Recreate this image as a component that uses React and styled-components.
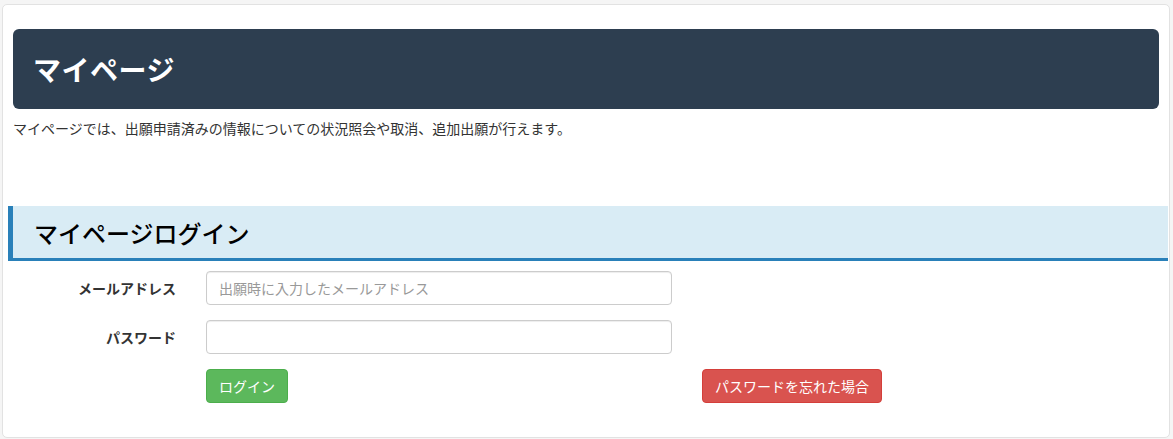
import React from "react"
import styled, { createGlobalStyle } from "styled-components"

const GlobalStyle = createGlobalStyle`
  html, body {
    margin: 0;
    padding: 0;
    background: #f5f5f5;
  }
  body {
    font-family: "Noto Sans CJK JP", "Liberation Sans", sans-serif;
    color: #333;
  }
  * {
    box-sizing: border-box;
  }
`

const Page = styled.div`
  padding: 4px 3px 2px 2px;
`

const Card = styled.div`
  background: #fff;
  border: 1px solid #e2e2e2;
  border-radius: 5px;
  padding: 24px 5px 34px 5px;
`

const Intro = styled.div`
  padding: 0 5px;
`

const Banner = styled.div`
  background: #2d3e50;
  border-radius: 6px;
  height: 80px;
  display: flex;
  align-items: center;
  padding: 0 20px;
  h1 {
    margin: 0;
    color: #fff;
    font-size: 28px;
    font-weight: 700;
    letter-spacing: 0.5px;
  }
`

const Lead = styled.p`
  margin: 10px 0 0;
  font-size: 14px;
  line-height: 18px;
  color: #333;
`

const SectionTitle = styled.h2`
  margin: 69px -4px 0 0;
  background: #d9ecf5;
  border-left: 5px solid #2980b9;
  border-bottom: 3px solid #2980b9;
  height: 55px;
  display: flex;
  align-items: center;
  padding-left: 21px;
  font-size: 24px;
  font-weight: 500;
  color: #000;
`

const Form = styled.form`
  display: grid;
  grid-template-columns: 168px 1fr;
  column-gap: 30px;
  row-gap: 15px;
  margin-top: 10px;
`

const Label = styled.label`
  text-align: right;
  align-self: center;
  font-size: 14px;
  font-weight: 700;
  color: #333;
`

const Input = styled.input`
  height: 34px;
  width: 466px;
  border: 1px solid #ccc;
  border-radius: 4px;
  padding: 6px 12px;
  font-size: 14px;
  font-family: inherit;
  color: #555;
  box-shadow: inset 0 1px 1px rgba(0, 0, 0, 0.075);
  &::placeholder {
    color: #999;
  }
`

const Button = styled.button`
  height: 34px;
  padding: 0 12px;
  font-size: 14px;
  font-family: inherit;
  color: #fff;
  border-radius: 4px;
  border: 1px solid ${p => (p.$variant === "danger" ? "#d43f3a" : "#4cae4c")};
  background: ${p => (p.$variant === "danger" ? "#d9534f" : "#5cb85c")};
  cursor: pointer;
`

const ButtonRow = styled.div`
  grid-column: 2;
  display: grid;
  grid-template-columns: 465px auto;
  column-gap: 31px;
  justify-items: start;
`

export default function App() {
  return (
    <>
      <GlobalStyle />
      <Page>
        <Card>
          <Intro>
            <Banner>
              <h1>マイページ</h1>
            </Banner>
            <Lead>
              マイページでは、出願申請済みの情報についての状況照会や取消、追加出願が行えます。
            </Lead>
          </Intro>
          <SectionTitle>マイページログイン</SectionTitle>
          <Form onSubmit={e => e.preventDefault()}>
            <Label htmlFor="mail">メールアドレス</Label>
            <Input id="mail" type="text" placeholder="出願時に入力したメールアドレス" />
            <Label htmlFor="pw">パスワード</Label>
            <Input id="pw" type="password" />
            <ButtonRow>
              <Button type="submit">ログイン</Button>
              <Button type="button" $variant="danger">
                パスワードを忘れた場合
              </Button>
            </ButtonRow>
          </Form>
        </Card>
      </Page>
    </>
  )
}
